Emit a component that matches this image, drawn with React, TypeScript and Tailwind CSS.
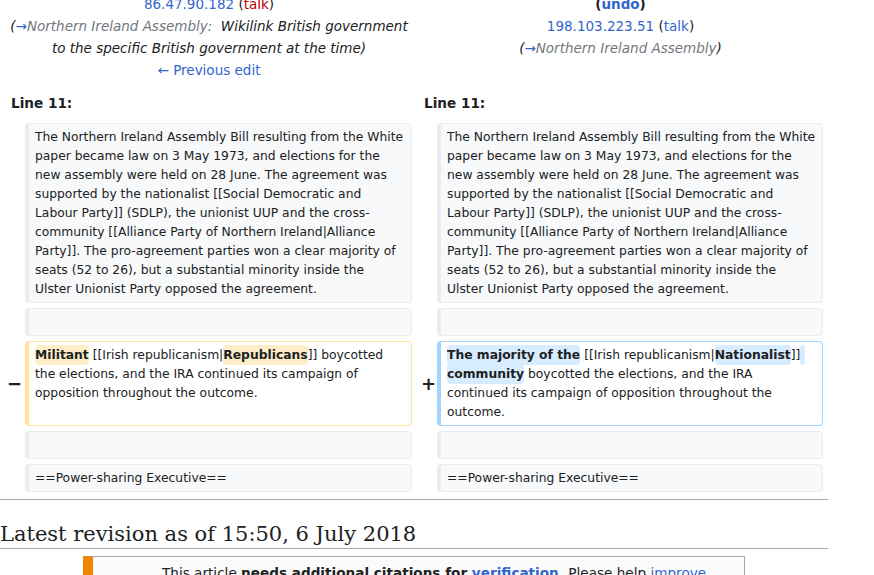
import React from 'react';

const link = 'text-[#3366cc]';

const Chg = ({ kind, children }: { kind: 'del' | 'add'; children: React.ReactNode }) => (
  <span
    className={`font-bold rounded-[4px] py-[3px] ${kind === 'del' ? 'bg-[#feeec8]' : 'bg-[#d8ecff]'}`}
  >
    {children}
  </span>
);

type BoxProps = {
  kind?: 'ctx' | 'del' | 'add';
  lines: React.ReactNode[];
};

const Box = ({ kind = 'ctx', lines }: BoxProps) => {
  const tone =
    kind === 'del'
      ? 'bg-white border-[#ffe49c]'
      : kind === 'add'
        ? 'bg-white border-[#a3d3ff]'
        : 'bg-[#f8f9fa] border-[#eaecf0]';
  return (
    <div
      className={`border border-l-4 rounded-[4px] pl-[6px] pr-[2px] py-[3.5px] text-[12.32px] leading-[19px] min-h-[28px] ${tone}`}
    >
      {lines.map((l, i) => (
        <React.Fragment key={i}>
          {i > 0 && <br />}
          {l}
        </React.Fragment>
      ))}
    </div>
  );
};

const Marker = ({ sign, right }: { sign?: string; right?: boolean }) => (
  <div className={`flex items-center justify-end text-[18px] font-bold ${right ? 'pr-[1px]' : 'pr-[3px]'}`}>
    {sign}
  </div>
);

const contextLines = [
  'The Northern Ireland Assembly Bill resulting from the White',
  'paper became law on 3 May 1973, and elections for the',
  'new assembly were held on 28 June. The agreement was',
  'supported by the nationalist [[Social Democratic and',
  'Labour Party]] (SDLP), the unionist UUP and the cross-',
  'community [[Alliance Party of Northern Ireland|Alliance',
  'Party]]. The pro-agreement parties won a clear majority of',
  'seats (52 to 26), but a substantial minority inside the',
  'Ulster Unionist Party opposed the agreement.',
];

const deletedLines = [
  <>
    <Chg kind="del">Militant</Chg> [[Irish republicanism|<Chg kind="del">Republicans</Chg>]] boycotted
  </>,
  'the elections, and the IRA continued its campaign of',
  'opposition throughout the outcome.',
];

const addedLines = [
  <>
    <Chg kind="add">The majority of the</Chg> [[Irish republicanism|<Chg kind="add">Nationalist</Chg>]]
    <Chg kind="add">{'\u00a0'}</Chg>
  </>,
  <>
    <Chg kind="add">community</Chg> boycotted the elections, and the IRA
  </>,
  'continued its campaign of opposition throughout the',
  'outcome.',
];

export default function App() {
  return (
    <div className="w-[874px] h-[575px] overflow-hidden bg-white font-['DejaVu_Sans',sans-serif] text-[#202122]">
      <div className="w-[828px] -mt-[7px]">
        {/* revision headers */}
        <div className="grid grid-cols-[412px_411px] text-center text-[13.5px] leading-[22px]">
          <div className="pl-[6px]">
            <div>
              <span className={link}>86.47.90.182</span> (<span className="text-[#ba0000]">talk</span>)
            </div>
            <div className="italic">
              (<span className={link}>→</span>
              <span className="text-[#72777d]">Northern Ireland Assembly:</span>
              {'\u00a0 '}Wikilink British government
              <br />
              to the specific British government at the time)
            </div>
            <div className={link}>← Previous edit</div>
          </div>
          <div className="pl-[6px]">
            <div className="font-bold">
              (<span className={link}>undo</span>)
            </div>
            <div>
              <span className={link}>198.103.223.51</span> (<span className={link}>talk</span>)
            </div>
            <div className="italic">
              (<span className={link}>→</span>
              <span className="text-[#72777d]">Northern Ireland Assembly</span>)
            </div>
          </div>
        </div>

        {/* diff body */}
        <div className="grid grid-cols-[25px_387px_25px_386px] gap-y-[5px] mt-[11px]">
          <div className="col-span-2 pl-[11px] mb-[4px] font-bold text-[13.6px] leading-[22px]">Line 11:</div>
          <div className="col-span-2 pl-[12px] mb-[4px] font-bold text-[13.6px] leading-[22px]">Line 11:</div>

          <Marker />
          <Box lines={contextLines} />
          <Marker right />
          <Box lines={contextLines} />

          <Marker />
          <Box lines={['']} />
          <Marker right />
          <Box lines={['']} />

          <Marker sign="−" />
          <Box kind="del" lines={deletedLines} />
          <Marker sign="+" right />
          <Box kind="add" lines={addedLines} />

          <Marker />
          <Box lines={['']} />
          <Marker right />
          <Box lines={['']} />

          <Marker />
          <Box lines={['==Power-sharing Executive==']} />
          <Marker right />
          <Box lines={['==Power-sharing Executive==']} />
        </div>

        <div className="mt-[7px] h-px bg-[#a2a9b1]" />

        <h2 className="mt-[21px] font-['DejaVu_Serif',serif] text-[21px] leading-[27px] border-b border-[#a2a9b1]">
          Latest revision as of 15:50, 6 July 2018
        </h2>

        <div className="mt-[7px] ml-[83px] w-[662px] border border-[#a2a9b1] border-l-[10px] border-l-[#f28500] bg-[#fbfbfb] pl-[69px] pr-[30px] pt-[5px] pb-[10px] text-[13.6px] leading-[22px]">
          This article <b>needs additional citations for <span className={link}>verification</span>.</b> Please help{' '}
          <span className={link}>improve</span> this article by adding citations to reliable sources.
        </div>
      </div>
    </div>
  );
}
